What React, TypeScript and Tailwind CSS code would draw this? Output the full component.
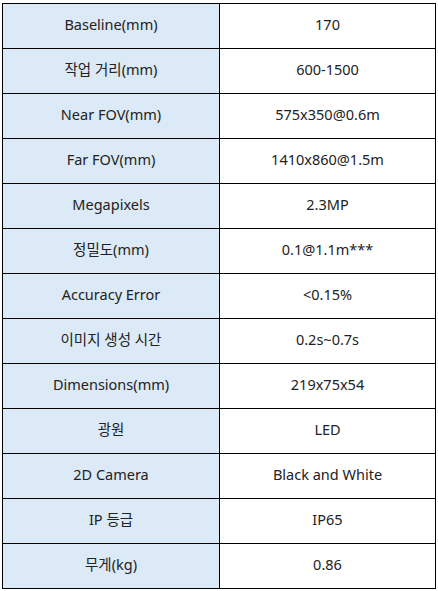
const rows: [string, string][] = [
  ["Baseline(mm)", "170"],
  ["작업 거리(mm)", "600-1500"],
  ["Near FOV(mm)", "575x350@0.6m"],
  ["Far FOV(mm)", "1410x860@1.5m"],
  ["Megapixels", "2.3MP"],
  ["정밀도(mm)", "0.1@1.1m***"],
  ["Accuracy Error", "<0.15%"],
  ["이미지 생성 시간", "0.2s~0.7s"],
  ["Dimensions(mm)", "219x75x54"],
  ["광원", "LED"],
  ["2D Camera", "Black and White"],
  ["IP 등급", "IP65"],
  ["무게(kg)", "0.86"],
];

export default function App() {
  return (
    <div className="w-[438px] h-[591px] bg-white pt-[3px] pl-[2px]">
      <table
        className="border-collapse w-[434px] text-[14.5px] text-[#222]"
        style={{ fontFamily: '"Noto Sans", "Noto Sans CJK KR", sans-serif' }}
      >
        <tbody>
          {rows.map(([label, value]) => (
            <tr key={label} className="h-[45px]">
              <td className="w-[217px] border border-black bg-[#dce9f6] text-center align-middle p-0 pb-[3px]">
                {label}
              </td>
              <td className="border border-black bg-white text-center align-middle p-0 pb-[3px]">
                {value}
              </td>
            </tr>
          ))}
        </tbody>
      </table>
    </div>
  );
}
